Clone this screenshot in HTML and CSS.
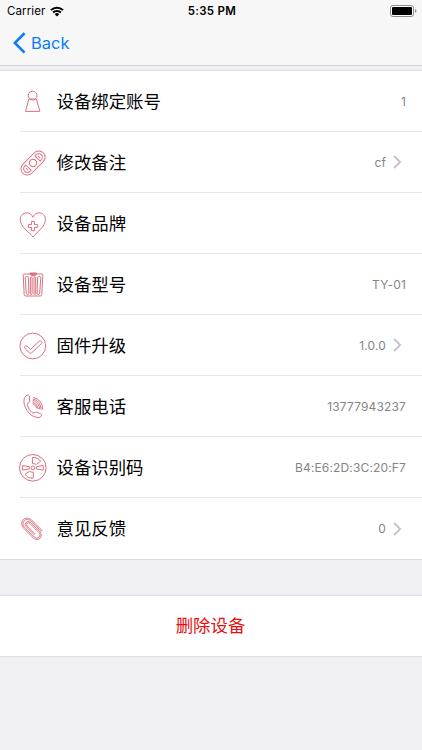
FILE: index.html
```html
<!DOCTYPE html>
<html lang="zh-CN">
<head>
  <meta charset="UTF-8" />
  <meta name="viewport" content="width=device-width, initial-scale=1.0"/>
  <title>设备</title>
  <link rel="stylesheet" href="styles.css">
</head>
<body>
  <header class="header">
    <div class="status-bar">
      <div class="carrier">
        <span>Carrier</span>
        <svg class="wifi" viewBox="0 0 14 11" width="14" height="11">
          <path d="M1 4.1a8.7 8.7 0 0 1 12 0M3.1 6.5a5.6 5.6 0 0 1 7.8 0" fill="none" stroke="#000" stroke-width="2"/>
          <path d="M7 10.4L4.7 8.2a3.3 3.3 0 0 1 4.6 0z"/>
        </svg>
      </div>
      <span class="time">5:35 PM</span>
      <svg class="battery" viewBox="0 0 27 12" width="27" height="12">
        <rect x=".5" y=".5" width="23" height="11" rx="2.5" fill="#fff" stroke="#8c8c8c"/>
        <rect x="2" y="2" width="20" height="8" rx="1"/>
        <path d="M25 4v4q1.5-.5 1.5-2T25 4z" fill="#8c8c8c"/>
      </svg>
    </div>
    <a class="back-link" href="#">
      <svg viewBox="0 0 13 22" width="13" height="22"><path d="M11.5 1.2L1.9 10.9l9.6 9.7" fill="none" stroke="#0a7cf8" stroke-width="2.7"/></svg>
      <span>Back</span>
    </a>
  </header>

  <main>
    <ul class="list">
      <li class="row">
        <svg class="icon" viewBox="0 0 28 28">
          <circle cx="13.6" cy="7.6" r="4.4"/>
          <path d="M9.8 11h7.6l3.500 12.400H6.500z"/>
        </svg>
        <div class="cell"><span class="label">设备绑定账号</span><span class="value">1</span></div>
      </li>
      <li class="row">
        <svg class="icon" viewBox="0 0 28 28">
          <g transform="rotate(-45 14 14)">
            <rect x="-.5" y="7.700" width="29" height="12.600" rx="6.300"/>
            <circle cx="14" cy="14" r="3.600"/>
            <path d="M7.500 10.300v7.400H6a3.700 3.700 0 0 1 0-7.400zM20.500 10.300v7.400H22a3.700 3.700 0 0 0 0-7.400z"/>
            <path d="M5.400 12.500v3M22.600 12.500v3"/>
          </g>
        </svg>
        <div class="cell"><span class="label">修改备注</span><span class="value">cf</span><svg class="arrow" viewBox="0 0 9 14"><path d="M1 1l6.200 6L1 13"/></svg></div>
      </li>
      <li class="row">
        <svg class="icon" viewBox="0 0 28 28">
          <path d="M14 27C11 22.500 1.300 17.500 1.300 9.300C1.300 5.500 4 2.800 7.600 2.800c3 0 5.200 1.800 6.200 4.500c1-2.700 3.300-4.500 6.300-4.500c3.700 0 6.300 2.700 6.300 6.500C26.400 17.500 17 22.500 14 27z"/>
          <path d="M12.600 11.300h2.800v3.300h3.300v2.800h-3.300v3.300h-2.800v-3.300H9.300v-2.800h3.300z"/>
        </svg>
        <div class="cell"><span class="label">设备品牌</span></div>
      </li>
      <li class="row">
        <svg class="icon" viewBox="0 0 28 28">
          <path d="M5.300 3h17.400q1.200 0 1.100 1.200l-1 19.300q-.1 1.500-1.400 1.500H6.600q-1.300 0-1.400-1.500l-1-19.300q-.1-1.200 1.100-1.200z"/>
          <path d="M7.300 5.500h.9q1.200 0 1.200 1.200l.5 15.500q0 1.300-1.200 1.300q-1.300 0-1.400-1.300L6.200 6.700q0-1.200 1.100-1.200zM20.700 5.500h-.9q-1.200 0-1.200 1.200l-.5 15.500q0 1.300 1.200 1.300q1.300 0 1.400-1.300l1.100-15.500q0-1.200-1.100-1.200z"/>
          <rect x="11.400" y="6" width="1.700" height="17.500" rx=".8"/>
          <rect x="15" y="6" width="1.700" height="17.500" rx=".8"/>
          <path class="solid" d="M11 2h6.500v1.200l-1.800 1.500h-2.800L11 3.200z"/>
        </svg>
        <div class="cell"><span class="label">设备型号</span><span class="value">TY-01</span></div>
      </li>
      <li class="row">
        <svg class="icon" viewBox="0 0 28 28">
          <circle cx="13.800" cy="14" r="12.900"/>
          <path d="M5.700 14.500q1.200-1.500 2.500-.3l3.300 3.200l8.800-8.200q1.300-.8 2.300.3q.8 1.200-.2 2.100l-9.800 9.200q-1.100.9-2.200-.1l-4.600-4.400q-.8-.9-.1-1.800z"/>
        </svg>
        <div class="cell"><span class="label">固件升级</span><span class="value">1.0.0</span><svg class="arrow" viewBox="0 0 9 14"><path d="M1 1l6.200 6L1 13"/></svg></div>
      </li>
      <li class="row">
        <svg class="icon" viewBox="0 0 28 28">
          <path d="M6.500 3.300q1.300-1.600 3-1.200q1 .4 1 2.100v4q0 1.500-1.500 2q-1 .5-.6 2q1.300 4.800 4.600 7.400q1 .8 2 .2q1.300-1 2.600-.5l4 1.300q1.500.6 1 2.100q-1 2.100-3.500 1.900q-6.600-.7-10.500-6.300Q3.700 11.700 5.300 5.500q.3-1.300 1.200-2.200z"/>
          <path d="M14.300 4.300Q23.500 7 23.700 16.500M13.900 5.800Q21.500 8 22.200 16.500M13.500 7.200q6.500 2.300 7.300 9M13.500 8.800q4.900 2.200 5.900 7.200M13.500 10.500q3.200 1.500 4.300 4.800"/>
        </svg>
        <div class="cell"><span class="label">客服电话</span><span class="value">13777943237</span></div>
      </li>
      <li class="row">
        <svg class="icon" viewBox="0 0 28 28">
          <circle cx="13.800" cy="13.800" r="13.300"/>
          <circle cx="13.800" cy="13.800" r="1.900"/>
          <path d="M13.400 9.700V3.500q5.500-.5 8.200 3.900l-4.300 3q-1.600-.9-3.900-.7zM14.300 18.200v5.900q-5.500.5-8.200-3.900l4.400-2.800q1.600.9 3.800.8z"/>
          <path d="M10.300 12.700L3.600 11.500Q2.700 14 3.600 16.100l6.700-1.200zM17.300 12.700l6.700-1.200q.9 2.500 0 4.600l-6.700-1.200z"/>
        </svg>
        <div class="cell"><span class="label">设备识别码</span><span class="value">B4:E6:2D:3C:20:F7</span></div>
      </li>
      <li class="row">
        <svg class="icon" viewBox="0 0 28 28">
          <g transform="translate(.3 -.3) rotate(45 14 14) scale(.93 .82) translate(1 3)">
            <path d="M22 9.500H6.500a5.500 5.500 0 0 0 0 11h14.500a4 4 0 0 0 0-8H7.500a2 2 0 0 0 0 4.500H19"/>
            <path d="M22 8H6.500a7 7 0 0 0 0 14H21a5.500 5.500 0 0 0 0-11H7.500a3.500 3.500 0 0 0 0 7.500H19v-1.500M22 8v1.500"/>
          </g>
        </svg>
        <div class="cell"><span class="label">意见反馈</span><span class="value">0</span><svg class="arrow" viewBox="0 0 9 14"><path d="M1 1l6.200 6L1 13"/></svg></div>
      </li>
    </ul>

    <button class="delete-btn" type="button">删除设备</button>
  </main>
</body>
</html>
```

FILE: styles.css
```css
* {
  box-sizing: border-box;
}

body {
  margin: 0;
  min-height: 750px;
  font-family: Inter, 'Noto Sans CJK SC', sans-serif;
  background-color: #efeff4;
  color: #000;
}

.header {
  height: 66px;
  background-color: #f7f7f8;
  border-bottom: 1px solid #d3d3da;
}

.status-bar {
  display: grid;
  grid-template-columns: 1fr auto 1fr;
  align-items: center;
  height: 22px;
  padding: 0 5px 0 7px;
  font-size: 11.5px;
}

.carrier {
  display: flex;
  align-items: center;
  gap: 5px;
  letter-spacing: 0.1px;
}

.time {
  font-weight: 600;
  letter-spacing: 0.3px;
}

.battery {
  justify-self: end;
}

.back-link {
  display: inline-flex;
  align-items: center;
  gap: 5px;
  height: 42px;
  padding-left: 13px;
  font-size: 16.5px;
  color: #0a7cf8;
  text-decoration: none;
}

.list {
  margin: 4px 0 0;
  padding: 0;
  list-style: none;
  background-color: #fff;
  border-top: 1px solid #dcdce1;
  border-bottom: 1px solid #dcdce1;
}

.row {
  display: flex;
  height: 61px;
  padding-left: 19px;
  align-items: center;
}

.icon {
  flex: none;
  width: 28px;
  height: 28px;
  overflow: visible;
  fill: none;
  stroke: #d9717f;
  stroke-width: 1;
}

.icon .solid {
  fill: #d9717f;
}

.cell {
  flex: 1;
  display: flex;
  align-items: center;
  height: 100%;
  margin-left: -27px;
  padding: 0 16px 0 36.5px;
  border-bottom: 1px solid #e6e6e8;
}

.row:last-child .cell {
  border-bottom: none;
}

.label {
  flex: 1;
  padding-bottom: 2px;
  font-size: 17.4px;
}

.value {
  font-size: 12px;
  letter-spacing: 0.15px;
  color: #858585;
}

.arrow {
  width: 9px;
  height: 14px;
  margin: 0 4px 0 7px;
  fill: none;
  stroke: #c3c3c8;
  stroke-width: 1.8;
}

.delete-btn {
  display: block;
  width: 100%;
  height: 62px;
  margin-top: 35px;
  padding: 0 1px 3px 0;
  border: solid #dcdce1;
  border-width: 1px 0;
  background-color: #fff;
  font-family: inherit;
  font-size: 17.4px;
  color: #e60f12;
}
```
